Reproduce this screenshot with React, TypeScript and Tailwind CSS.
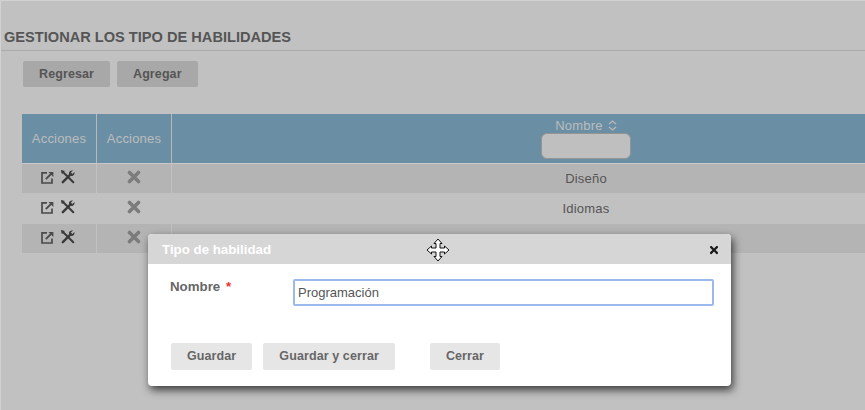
import { FaTimes } from "react-icons/fa";

const font = { fontFamily: '"Liberation Sans", Arial, sans-serif' };

// Row data for the table
const rows = [
  { name: "Diseño", striped: true, height: "h-[29px]" },
  { name: "Idiomas", striped: false, height: "h-[31px]" },
  { name: "", striped: true, height: "h-[29px]" },
];

function ExternalIcon() {
  return (
    <svg width="13" height="13" viewBox="0 0 13 13" fill="none" stroke="#4a4a4a" strokeWidth="1.700">
      <path d="M6 1.800H1v10.200h10V7.500" />
      <path d="M4.800 8.200 11 2" strokeWidth="1.800" />
      <path d="M7.400 1h5v5z" fill="#4a4a4a" stroke="none" />
    </svg>
  );
}

function ToolsIcon() {
  return (
    <svg width="14" height="14" viewBox="0 0 14 14" fill="none" stroke="#3a3a3a" strokeLinecap="round">
      <path d="M2 2 12.300 12.300" strokeWidth="2" />
      <path d="M0.500 0.500 3.300 1.300 1.300 3.300Z" fill="#3a3a3a" strokeWidth="0.800" />
      <path d="M1.800 12.200 8.800 5.200" strokeWidth="2.400" />
      <path d="M7.900 3.300C7.900 1.500 9.800 0 12 .5L9.900 2.600 11.400 4.100 13.500 2C14 4.200 12.500 6.100 10.700 6.100 9.200 6.100 7.900 4.800 7.900 3.300Z" fill="#3a3a3a" stroke="none" />
    </svg>
  );
}

function CrossIcon() {
  return (
    <svg width="14" height="14" viewBox="0 0 14 14" stroke="#7c7c7c" strokeWidth="3.600" strokeLinecap="round">
      <path d="M2.500 2.500 11.500 11.500M11.500 2.500 2.500 11.500" />
    </svg>
  );
}

function MoveCursor() {
  return (
    <svg width="24" height="24" viewBox="0 0 24 24" fill="#fff" stroke="#111" strokeWidth="1" strokeLinejoin="round">
      <path d="M12 1 16 5.500H14V10H18.500V8L23 12 18.500 16V14H14V18.500H16L12 23 8 18.500H10V14H5.500V16L1 12 5.500 8V10H10V5.500H8Z" />
    </svg>
  );
}

function Button({ label, dim }: { label: string; dim?: boolean }) {
  return (
    <button
      className={
        dim
          ? "h-[26px] rounded-[2px] bg-[#a8a8a8] px-4 text-[12.500px] font-bold text-[#555] tracking-[0.1px]"
          : "h-[27px] rounded-[2px] bg-[#e6e6e6] px-4 text-[12.500px] font-bold text-[#666] tracking-[0.1px]"
      }
    >
      {label}
    </button>
  );
}

function Modal() {
  return (
    <div className="absolute left-[147px] top-[233px] w-[583px] h-[152px] rounded-[4px] bg-white shadow-[2px_4px_8px_rgba(0,0,0,0.7)] overflow-hidden">
      <div className="flex h-[30px] items-center justify-between bg-[#d6d6d6] pl-[14px] pr-[11px] pt-[1px]">
        <span className="text-[13.300px] font-bold text-white">Tipo de habilidad</span>
        <FaTimes className="text-[#1a1a1a] text-[12px]" />
      </div>
      <div className="flex items-start pl-[22px] pr-[17px] pt-[13px]">
        <label className="w-[124px] text-[13.300px] font-bold text-[#666]">
          Nombre <span className="ml-[2px] text-[#f03030]">*</span>
        </label>
        <input
          readOnly
          value="Programación"
          className="mt-[2px] -ml-[1px] h-[27px] flex-1 rounded-[2px] border-2 border-[#9ab9ec] px-[3px] text-[13px] text-[#555] outline-none"
        />
      </div>
      <div className="flex pl-[23px] pt-[37px]">
        <Button label="Guardar" />
        <div className="ml-[11px]">
          <Button label="Guardar y cerrar" />
        </div>
        <div className="ml-[35px]">
          <Button label="Cerrar" />
        </div>
      </div>
      <div className="absolute left-[278px] top-[4px]">
        <MoveCursor />
      </div>
    </div>
  );
}

export default function App() {
  return (
    <div style={font} className="relative h-[410px] w-[865px] overflow-hidden border-l border-t border-[#d2d2d2] bg-[#c1c1c1]">
      {/* Title */}
      <div className="border-b border-[#ababab] pl-[3px] pt-[28px] h-[50px]">
        <h1 className="text-[14.600px] font-bold leading-[16px] text-[#555]">GESTIONAR LOS TIPO DE HABILIDADES</h1>
      </div>

      {/* Buttons */}
      <div className="flex gap-[7px] pl-[22px] pt-[10px]">
        <Button dim label="Regresar" />
        <Button dim label="Agregar" />
      </div>

      {/* Table */}
      <div className="ml-[21px] mt-[27px] w-[978px] text-[13px] tracking-[0.2px]">
        <div className="flex h-[49px] bg-[#6a8fa5] text-[#bcbcbc]">
          <div className="flex w-[75px] items-center justify-center border-r border-[#b8b8b8]">Acciones</div>
          <div className="flex w-[75px] items-center justify-center border-r border-[#b8b8b8]">Acciones</div>
          <div className="flex flex-1 flex-col items-center pt-[4px]">
            <div className="flex h-[15px] items-center gap-[5px]">
              <span>Nombre</span>
              <svg width="9" height="11" viewBox="0 0 9 11" fill="none" stroke="#b8b8b8" strokeWidth="1.300">
                <path d="M1 4 4.500 1 8 4M1 7l3.500 3L8 7" />
              </svg>
            </div>
            <div className="h-[26px] w-[90px] rounded-[6px] border border-[#949494] bg-[#bfbfbf]" />
          </div>
        </div>
        <div className="h-[1px] bg-[#c8c8c8]" />
        {rows.map((row, i) => (
          <div key={i} className={`flex ${row.height} text-[#555] ${row.striped ? "bg-[#b4b4b4]" : "bg-[#c1c1c1]"}`}>
            <div className="flex w-[75px] items-center justify-center gap-[7px] border-r border-[#c1c1c1] pb-[3px] pr-[2px]">
              <ExternalIcon />
              <ToolsIcon />
            </div>
            <div className="flex w-[75px] items-center justify-center border-r border-[#c1c1c1] pb-[3px]">
              <CrossIcon />
            </div>
            <div className="flex flex-1 items-center justify-center">{row.name}</div>
          </div>
        ))}
      </div>

      <Modal />
    </div>
  );
}
